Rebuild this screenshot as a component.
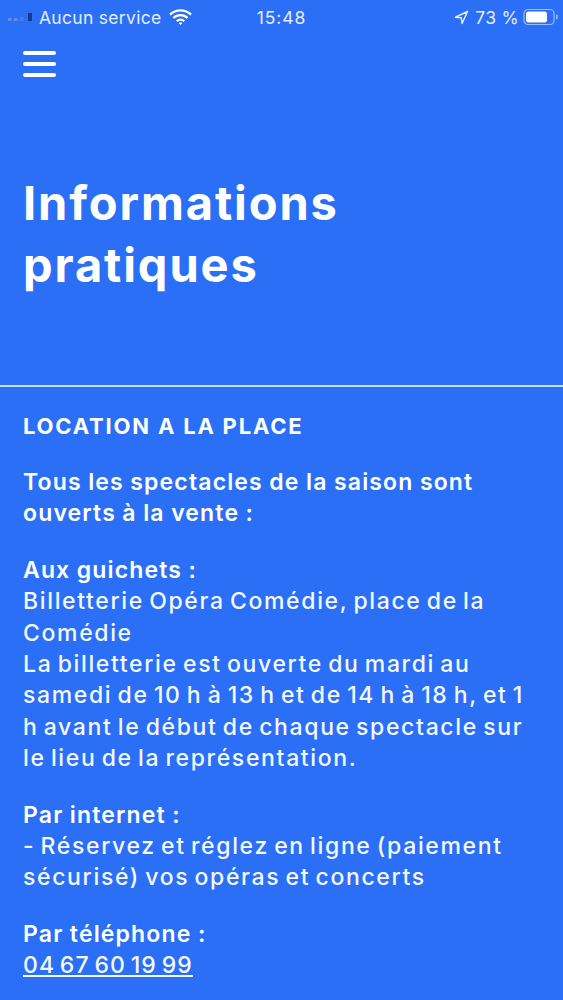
<div class="page">
  <div class="status">
    <div class="left">
      <svg class="signal" width="33" height="10" viewBox="0 0 33 10"><rect x="8" y="6" width="3.5" height="3" fill="#5b8ff5"/><rect x="14" y="6" width="3.5" height="3" fill="#5b8ff5"/><rect x="20" y="5" width="3.5" height="4" fill="#4a7fe8"/><rect x="28" y="1" width="4" height="8" fill="#123a94"/></svg>
      <span>Aucun service</span>
      <svg class="wifi" width="23" height="17" viewBox="0 0 23 17"><path d="M1 5.6a15 15 0 0 1 21 0M4.4 9a10 10 0 0 1 14.2 0M7.8 12.2a5 5 0 0 1 7.4 0" fill="none" stroke="#fff" stroke-width="2.2"/><path d="M9.7 14.2a2.6 2.6 0 0 1 3.6 0L11.5 16z" fill="#fff"/></svg>
    </div>
    <div class="time">15:48</div>
    <div class="right">
      <svg width="15" height="15" viewBox="0 0 15 15"><path d="M13.5 1.5 1.5 7.2l5.8.6.8 5.7z" fill="none" stroke="#eaf1ff" stroke-width="1.4" stroke-linejoin="round"/></svg>
      <span>73 %</span>
      <svg width="36" height="18" viewBox="0 0 36 18"><rect x="1" y="1.5" width="30" height="15" rx="4" fill="none" stroke="#9dbdf7" stroke-width="1.2"/><rect x="3" y="3.5" width="21" height="11" rx="2.5" fill="#fff"/><rect x="33" y="6.5" width="1.6" height="5" rx="0.8" fill="#9dbdf7"/></svg>
    </div>
  </div>

  <button class="menu" aria-label="Menu"><i></i><i></i><i></i></button>

  <h1>Informations<br />pratiques</h1>

  <hr />

  <main>
    <h2>LOCATION A LA PLACE</h2>
    <p><strong>Tous les spectacles de la saison sont<br />ouverts à la vente :</strong></p>
    <p><strong>Aux guichets :</strong><br />Billetterie Opéra Comédie, place de la<br />Comédie<br />La billetterie est ouverte du mardi au<br />samedi de 10 h à 13 h et de 14 h à 18 h, et 1<br />h avant le début de chaque spectacle sur<br />le lieu de la représentation.</p>
    <p><strong>Par internet :</strong><br />- Réservez et réglez en ligne (paiement<br />sécurisé) vos opéras et concerts</p>
    <p><strong>Par téléphone :</strong><br /><a href="#tel">04 67 60 19 99</a></p>
  </main>
</div>

<style>
  :global(body) { margin: 0; background: #2a6ff6; }
  .page {
    width: 563px;
    height: 1000px;
    overflow: hidden;
    background: #2a6ff6;
    color: #f4f8ff;
    font-family: Inter, sans-serif;
  }
  .status {
    height: 34px;
    display: grid;
    grid-template-columns: 1fr auto 1fr;
    align-items: center;
    font-size: 17.5px;
    color: #e3edff;
    letter-spacing: 0.3px;
  }
  .left { display: flex; align-items: center; gap: 6px; }
  .left .wifi { margin-left: 1px; }
  .time { letter-spacing: 0.9px; }
  .right { display: flex; align-items: center; justify-content: flex-end; gap: 6px; padding-right: 4px; }
  .right svg:last-child { margin-left: -2px; }
  .menu {
    display: flex;
    flex-direction: column;
    gap: 7.5px;
    margin: 17px 0 0 23px;
    padding: 0;
    width: 33px;
    background: none;
    border: 0;
  }
  .menu i { display: block; height: 3.5px; border-radius: 2px; background: #fff; }
  h1 {
    margin: 95px 0 0 23px;
    font-size: 47px;
    line-height: 62px;
    font-weight: 700;
    letter-spacing: 1.9px;
    color: #fff;
  }
  hr {
    margin: 89px 0 0;
    border: 0;
    height: 2px;
    background: #c9dcff;
  }
  main { padding: 24px 23px 0; }
  h2 { margin: 0 0 25px; font-size: 22px; line-height: 31.4px; font-weight: 700; letter-spacing: 1.8px; color: #fff; }
  p { margin: 0 0 25px; font-size: 23px; font-weight: 500; line-height: 31.4px; letter-spacing: 1.65px; word-spacing: -2.5px; }
  strong { font-weight: 600; letter-spacing: 1.15px; word-spacing: -0.5px; color: #fff; }
  a { color: inherit; letter-spacing: 1.1px; text-decoration: underline; text-underline-offset: 2px; }
</style>
